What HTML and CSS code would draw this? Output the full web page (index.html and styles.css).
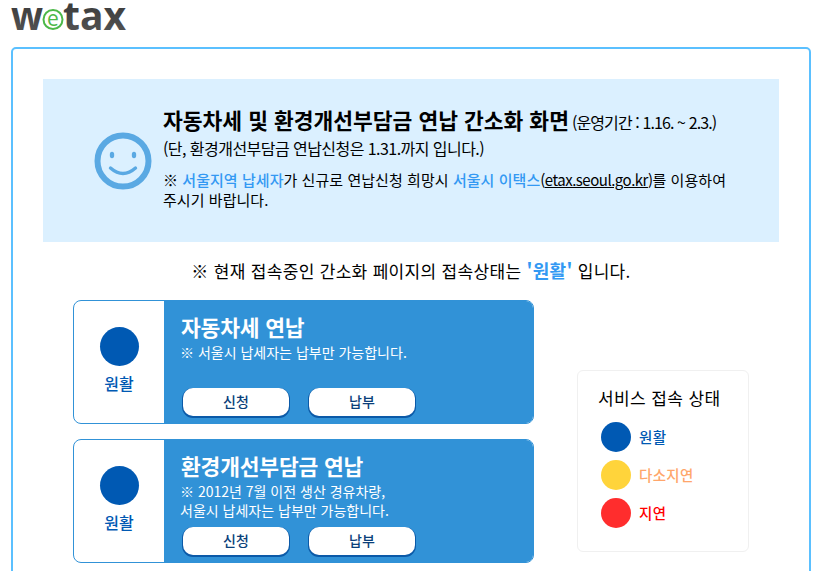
FILE: index.html
```html
<!DOCTYPE html>
<html lang="ko">
<head>
<meta charset="utf-8">
<title>wetax</title>
<link rel="stylesheet" href="styles.css">
</head>
<body>
<header class="logo">
  <svg class="logo-svg" width="140" height="47" viewBox="0 0 140 47">
    <defs>
      <linearGradient id="logoFill" x1="0" y1="0" x2="0" y2="1">
        <stop offset="0" stop-color="#2f2f2f"/>
        <stop offset="1" stop-color="#5a5a5a"/>
      </linearGradient>
    </defs>
    <text class="logo-text" x="11" y="30" textLength="32" lengthAdjust="spacingAndGlyphs" fill="url(#logoFill)">w</text>
    <circle cx="53" cy="19.5" r="9.5" fill="none" stroke="#4cb848" stroke-width="2"/>
    <text class="logo-e" x="53" y="25.5" text-anchor="middle" fill="#4cb848">e</text>
    <text class="logo-text" x="63" y="30" textLength="63" lengthAdjust="spacingAndGlyphs" fill="url(#logoFill)">tax</text>
  </svg>
</header>
<main class="box">
  <section class="banner">
    <svg class="smile" width="58" height="58" viewBox="0 0 58 58">
      <circle cx="29" cy="29" r="25.5" fill="none" stroke="#5aa9e3" stroke-width="6"/>
      <ellipse cx="18" cy="23" rx="2.2" ry="3.2" fill="#5aa9e3"/>
      <ellipse cx="40" cy="23" rx="2.2" ry="3.2" fill="#5aa9e3"/>
      <path d="M16.5 36 Q29 47 41.5 36" fill="none" stroke="#5aa9e3" stroke-width="3.4" stroke-linecap="round"/>
    </svg>
    <div class="banner-text">
      <h1 class="title">자동차세 및 환경개선부담금 연납 간소화 화면 <small class="period">(운영기간 : 1.16. ~ 2.3.)</small></h1>
      <p class="sub">(단, 환경개선부담금 연납신청은 1.31.까지 입니다.)</p>
      <p class="note">※ <b class="hl">서울지역 납세자</b>가 신규로 연납신청 희망시 <b class="hl">서울시 이택스</b><span class="url">(<u>etax.seoul.go.kr</u>)</span>를 이용하여<br>주시기 바랍니다.</p>
    </div>
  </section>
  <p class="status">※ 현재 접속중인 간소화 페이지의 접속상태는 <b class="status-hl">'원활'</b> 입니다.</p>
  <div class="columns">
    <div class="cards">
      <article class="card">
        <div class="state"><span class="dot dot-lg blue"></span><span class="state-label">원활</span></div>
        <div class="info">
          <h2 class="card-title">자동차세 연납</h2>
          <p class="card-note">※ 서울시 납세자는 납부만 가능합니다.</p>
          <div class="btns"><a class="btn">신청</a><a class="btn">납부</a></div>
        </div>
      </article>
      <article class="card">
        <div class="state"><span class="dot dot-lg blue"></span><span class="state-label">원활</span></div>
        <div class="info">
          <h2 class="card-title">환경개선부담금 연납</h2>
          <p class="card-note">※ 2012년 7월 이전 생산 경유차량,<br>서울시 납세자는 납부만 가능합니다.</p>
          <div class="btns"><a class="btn">신청</a><a class="btn">납부</a></div>
        </div>
      </article>
    </div>
    <aside class="legend">
      <h3 class="legend-title">서비스 접속 상태</h3>
      <div class="legend-row"><span class="dot blue"></span><span class="lg-text t-blue">원활</span></div>
      <div class="legend-row"><span class="dot yellow"></span><span class="lg-text t-orange">다소지연</span></div>
      <div class="legend-row"><span class="dot red"></span><span class="lg-text t-red">지연</span></div>
    </aside>
  </div>
</main>
</body>
</html>
```
FILE: styles.css
```css
html, body { margin: 0; padding: 0; height: 571px; overflow: hidden; background: #fff; }
body { font-family: "Noto Sans CJK KR", "Noto Sans", sans-serif; color: #000; }
h1, h2, h3, p { margin: 0; }

.logo { height: 47px; }
.logo-svg { display: block; }
.logo-text { font-family: "Open Sans", "Liberation Sans", sans-serif; font-weight: 700; font-size: 40px; }
.logo-e { font-family: "Open Sans", "Liberation Sans", sans-serif; font-weight: 400; font-size: 21px; }

.box { width: 800px; height: 600px; margin-left: 11px; box-sizing: border-box; border: 2px solid #5bc0ff; border-radius: 5px; padding: 30px 30px 0; }

.banner { display: flex; align-items: flex-start; height: 163px; background: #dbf0ff; padding: 0 0 0 51px; box-sizing: border-box; }
.smile { margin: 53px 11px 0 0; flex: none; }
.banner-text { padding-top: 27px; }
.title { font-size: 21.5px; font-weight: 700; line-height: 28px; letter-spacing: 0; white-space: nowrap; }
.period { font-size: 16px; font-weight: 400; letter-spacing: -0.9px; margin-left: -3px; }
.sub { font-size: 16px; line-height: 22px; letter-spacing: -0.55px; margin-top: 1px; white-space: nowrap; }
.note { font-size: 15px; line-height: 20px; margin-top: 11px; letter-spacing: 0.05px; white-space: nowrap; }
.hl { color: #3399f3; font-weight: 500; }
.url { letter-spacing: -0.5px; }

.status { text-align: center; font-size: 17px; line-height: 24px; margin-top: 16px; letter-spacing: 0.32px; }
.status-hl { color: #3399f3; font-size: 18px; font-weight: 700; }

.columns { display: flex; padding: 17px 0 0 30px; }
.cards { width: 461px; display: flex; flex-direction: column; gap: 15px; flex: none; }
.card { display: flex; height: 124px; box-sizing: border-box; border: 1px solid #3192d7; border-radius: 8px; overflow: hidden; }
.state { width: 90px; flex: none; display: flex; flex-direction: column; align-items: center; padding-top: 26px; box-sizing: border-box; }
.dot { display: block; width: 30px; height: 30px; border-radius: 50%; flex: none; }
.dot-lg { width: 39px; height: 39px; }
.blue { background: #0059b3; }
.yellow { background: #ffd43b; }
.red { background: #ff2d2d; }
.state-label { margin-top: 5px; font-size: 16px; line-height: 24px; font-weight: 500; color: #0059b3; }

.info { flex: 1; background: #3192d7; color: #fff; padding: 11px 0 0 17px; display: flex; flex-direction: column; }
.card-title { font-size: 21.5px; font-weight: 700; line-height: 30px; letter-spacing: -0.2px; }
.card-note { font-size: 14px; line-height: 19px; letter-spacing: 0; margin: 1px 0 0 -1px; }
.btns { display: flex; gap: 20px; margin-top: auto; margin-bottom: 7px; padding-left: 2px; }
.btn { width: 106px; height: 28px; background: #fff; color: #0a3f7a; border-radius: 10px; box-shadow: 0 1px 0 1px #0b5aa8; text-align: center; font-size: 14px; font-weight: 500; line-height: 27px; }

.legend { width: 172px; height: 182px; margin: 70px 0 0 43px; box-sizing: border-box; border: 1px solid #f0f0f0; border-radius: 6px; padding: 15px 0 0 20px; flex: none; }
.legend-title { font-size: 17px; font-weight: 400; line-height: 24px; letter-spacing: 0.4px; margin-bottom: 12px; }
.legend-row { display: flex; align-items: center; gap: 8px; height: 30px; margin: 0 0 8px 3px; }
.lg-text { font-size: 14.5px; font-weight: 500; line-height: 20px; letter-spacing: 0.3px; }
.t-blue { color: #0059b3; }
.t-orange { color: #ffa66b; }
.t-red { color: #ff0000; }
```
